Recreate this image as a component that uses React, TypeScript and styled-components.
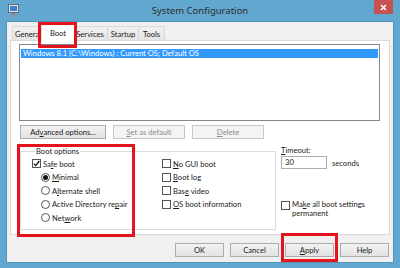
import React from 'react';
import styled, { createGlobalStyle } from 'styled-components';

const GlobalStyle = createGlobalStyle`
  html, body {
    margin: 0;
    padding: 0;
  }
  body {
    width: 400px;
    height: 268px;
    overflow: hidden;
    font-family: Lato, "Noto Sans", sans-serif;
    font-size: 7.6px;
    color: #1a1a1a;
  }
`;

const Window = styled.div`
  position: relative;
  width: 400px;
  height: 268px;
  box-sizing: border-box;
  background: #62a7cf;
  display: flex;
  flex-direction: column;
`;

const TitleBar = styled.div`
  height: 22px;
  flex: none;
  display: grid;
  grid-template-columns: 1fr auto 1fr;
  align-items: start;
`;

const AppIcon = styled.svg`
  margin: 4px 0 0 8px;
`;

const Title = styled.div`
  font-family: "Noto Sans", sans-serif;
  font-size: 9.5px;
  line-height: 22px;
  color: #2e2e2e;
`;

const CloseButton = styled.div`
  justify-self: end;
  width: 19px;
  height: 14px;
  margin-right: 7px;
  background: #c75050;
  display: flex;
  align-items: center;
  justify-content: center;
`;

const Client = styled.div`
  flex: 1;
  margin: 0 7px 6px;
  padding: 2px 3px 5px;
  background: #f0f0f0;
  box-shadow: 0 0 0 1px #5592ba;
  display: flex;
  flex-direction: column;
`;

const TabStrip = styled.div`
  height: 16px;
  flex: none;
  display: flex;
  align-items: flex-end;
  padding-left: 2px;
`;

const Tab = styled.div<{ $w: number; $active?: boolean }>`
  position: relative;
  box-sizing: border-box;
  width: ${(p) => (p.$active ? p.$w + 4 : p.$w)}px;
  height: ${(p) => (p.$active ? 17 : 14)}px;
  margin: 0 ${(p) => (p.$active ? -3 : -1)}px ${(p) => (p.$active ? -1 : 0)}px ${(p) => (p.$active ? -2 : 0)}px;
  border: 1px solid #d9d9d9;
  border-bottom: none;
  background: ${(p) => (p.$active ? '#fff' : 'linear-gradient(#f0f0f0, #e5e5e5)')};
  z-index: ${(p) => (p.$active ? 2 : 1)};
  display: flex;
  align-items: center;
  justify-content: center;
  color: #1a1a1a;
  white-space: nowrap;
`;

const Panel = styled.div`
  height: 195px;
  flex: none;
  box-sizing: border-box;
  background: #fff;
  border: 1px solid #d9d9d9;
  padding: 3px 9px 0 8px;
  display: flex;
  flex-direction: column;
`;

const ListBox = styled.div`
  height: 77px;
  flex: none;
  box-sizing: border-box;
  border: 1px solid #828790;
  background: #fff;
  padding: 4px 1px 0;
`;

const ListRow = styled.div<{ $selected?: boolean }>`
  height: 9px;
  line-height: 9px;
  padding-left: 2px;
  background: ${(p) => (p.$selected ? '#3399ff' : 'transparent')};
  color: ${(p) => (p.$selected ? '#fff' : '#1a1a1a')};
  white-space: nowrap;
`;

const ActionRow = styled.div`
  display: flex;
  gap: 7px;
  margin-top: 4px;
  padding-left: 1px;
`;

const Button = styled.div<{ $w: number; $disabled?: boolean }>`
  position: relative;
  box-sizing: border-box;
  width: ${(p) => p.$w}px;
  height: 14px;
  border: 1px solid ${(p) => (p.$disabled ? '#c6c6c6' : '#acacac')};
  background: ${(p) => (p.$disabled ? '#f4f4f4' : 'linear-gradient(#f2f2f2, #e3e3e3)')};
  color: ${(p) => (p.$disabled ? '#8d8d8d' : '#1a1a1a')};
  display: flex;
  align-items: center;
  justify-content: center;
  white-space: nowrap;
`;

const Lower = styled.div`
  display: flex;
  margin-top: 7px;
  padding-left: 1px;
`;

const GroupBox = styled.fieldset`
  position: relative;
  flex: none;
  box-sizing: border-box;
  width: 256px;
  height: 84px;
  margin: 0;
  padding: 1px 0 0 11px;
  border: 1px solid #dcdcdc;
  display: flex;
`;

const Legend = styled.legend`
  padding: 0 1px;
  margin-left: 3px;
  line-height: 10px;
`;

const Column = styled.div<{ $w?: number }>`
  width: ${(p) => (p.$w ? `${p.$w}px` : 'auto')};
  display: flex;
  flex-direction: column;
`;

const OptionRow = styled.div<{ $indent?: number }>`
  height: 13.5px;
  display: flex;
  align-items: center;
  gap: 2px;
  padding-left: ${(p) => p.$indent ?? 0}px;
  white-space: nowrap;
`;

const CheckBox = styled.span`
  box-sizing: border-box;
  width: 9px;
  height: 9px;
  flex: none;
  border: 1px solid #555;
  background: #fff;
  display: flex;
  align-items: center;
  justify-content: center;
`;

const Radio = styled.span<{ $on?: boolean }>`
  box-sizing: border-box;
  width: 9px;
  height: 9px;
  flex: none;
  border: 1px solid #555;
  border-radius: 50%;
  background: #fff;
  display: flex;
  align-items: center;
  justify-content: center;
  &::after {
    content: '';
    width: 5px;
    height: 5px;
    border-radius: 50%;
    background: ${(p) => (p.$on ? '#111' : 'transparent')};
  }
`;

const Side = styled.div`
  margin-left: 5px;
  min-width: 0;
  display: flex;
  flex-direction: column;
`;

const FieldLabel = styled.div`
  line-height: 10px;
  margin-top: -1px;
`;

const TimeoutRow = styled.div`
  display: flex;
  align-items: center;
  gap: 5px;
  margin-top: 1px;
`;

const TextInput = styled.div`
  box-sizing: border-box;
  width: 46px;
  height: 13px;
  border: 1px solid #abadb3;
  background: #fff;
  padding-left: 3px;
  line-height: 11px;
`;

const PermanentRow = styled.div`
  display: flex;
  align-items: flex-start;
  gap: 2px;
  margin-top: 32px;
`;

const PermanentText = styled.div`
  line-height: 9px;
  margin-top: -1px;
  white-space: nowrap;
`;

const DialogButtons = styled.div`
  margin-top: auto;
  display: flex;
  justify-content: flex-end;
  gap: 6px;
  padding-right: 1px;
`;

const U = styled.span`
  text-decoration: underline;
`;

const Highlight = styled.span<{ $t: number; $l: number; $b: number; $r?: number; $w?: number }>`
  position: absolute;
  top: ${(p) => p.$t}px;
  left: ${(p) => p.$l}px;
  bottom: ${(p) => p.$b}px;
  ${(p) => (p.$w ? `width: ${p.$w}px;` : `right: ${p.$r}px;`)}
  box-sizing: border-box;
  border: 3px solid #e5141c;
  pointer-events: none;
  z-index: 5;
`;

const Check = () => (
  <svg width="7" height="7" viewBox="0 0 7 7">
    <path d="M0.8 3.6 L2.7 5.6 L6.3 1" fill="none" stroke="#111" strokeWidth="1.3" />
  </svg>
);

const tabs = [
  { label: 'General', w: 32 },
  { label: 'Boot', w: 30, active: true },
  { label: 'Services', w: 36 },
  { label: 'Startup', w: 32 },
  { label: 'Tools', w: 27 },
];

const App: React.FC = () => (
  <>
    <GlobalStyle />
    <Window>
      <TitleBar>
        <AppIcon width="11" height="13" viewBox="0 0 11 13">
          <rect x="0.5" y="0.5" width="10" height="8" fill="#dfe6ee" stroke="#5d6c7d" />
          <rect x="2" y="2" width="7" height="5" fill="#3f7fc4" />
          <rect x="4" y="9" width="3" height="2" fill="#7c8794" />
          <rect x="1.5" y="11" width="8" height="1.5" fill="#8a95a2" />
        </AppIcon>
        <Title>System Configuration</Title>
        <CloseButton>
          <svg width="7" height="7" viewBox="0 0 7 7">
            <path d="M1 1 L6 6 M6 1 L1 6" stroke="#fff" strokeWidth="1.6" />
          </svg>
        </CloseButton>
      </TitleBar>
      <Client>
        <TabStrip>
          {tabs.map((t) => (
            <Tab key={t.label} $w={t.w} $active={t.active}>
              {t.label}
              {t.active && <Highlight $t={-3} $l={-4} $r={-3} $b={-7} />}
            </Tab>
          ))}
        </TabStrip>
        <Panel>
          <ListBox>
            <ListRow $selected>Windows 8.1 (C:\Windows) : Current OS; Default OS</ListRow>
          </ListBox>
          <ActionRow>
            <Button $w={86}>
              Ad<U>v</U>anced options...
            </Button>
            <Button $w={72} $disabled>
              <U>S</U>et as default
            </Button>
            <Button $w={72} $disabled>
              <U>D</U>elete
            </Button>
          </ActionRow>
          <Lower>
            <GroupBox>
              <Legend>Boot options</Legend>
              <Highlight $t={-12} $l={-4} $w={118} $b={-8} />
              <Column $w={130}>
                <OptionRow>
                  <CheckBox>
                    <Check />
                  </CheckBox>
                  <span>
                    Sa<U>f</U>e boot
                  </span>
                </OptionRow>
                <OptionRow $indent={9}>
                  <Radio $on />
                  <span>
                    <U>M</U>inimal
                  </span>
                </OptionRow>
                <OptionRow $indent={9}>
                  <Radio />
                  <span>
                    A<U>l</U>ternate shell
                  </span>
                </OptionRow>
                <OptionRow $indent={9}>
                  <Radio />
                  <span>
                    Active Directory re<U>p</U>air
                  </span>
                </OptionRow>
                <OptionRow $indent={9}>
                  <Radio />
                  <span>
                    Net<U>w</U>ork
                  </span>
                </OptionRow>
              </Column>
              <Column>
                <OptionRow>
                  <CheckBox />
                  <span>
                    <U>N</U>o GUI boot
                  </span>
                </OptionRow>
                <OptionRow>
                  <CheckBox />
                  <span>
                    <U>B</U>oot log
                  </span>
                </OptionRow>
                <OptionRow>
                  <CheckBox />
                  <span>
                    Bas<U>e</U> video
                  </span>
                </OptionRow>
                <OptionRow>
                  <CheckBox />
                  <span>
                    <U>O</U>S boot information
                  </span>
                </OptionRow>
              </Column>
            </GroupBox>
            <Side>
              <FieldLabel>
                <U>T</U>imeout:
              </FieldLabel>
              <TimeoutRow>
                <TextInput>30</TextInput>
                <span>seconds</span>
              </TimeoutRow>
              <PermanentRow>
                <CheckBox />
                <PermanentText>
                  <div>
                    Ma<U>k</U>e all boot settings
                  </div>
                  <div>permanent</div>
                </PermanentText>
              </PermanentRow>
            </Side>
          </Lower>
        </Panel>
        <DialogButtons>
          <Button $w={49}>OK</Button>
          <Button $w={49}>Cancel</Button>
          <Button $w={49}>
            <U>A</U>pply
            <Highlight $t={-11} $l={-5} $r={-5} $b={-6} />
          </Button>
          <Button $w={49}>Help</Button>
        </DialogButtons>
      </Client>
    </Window>
  </>
);

export default App;
